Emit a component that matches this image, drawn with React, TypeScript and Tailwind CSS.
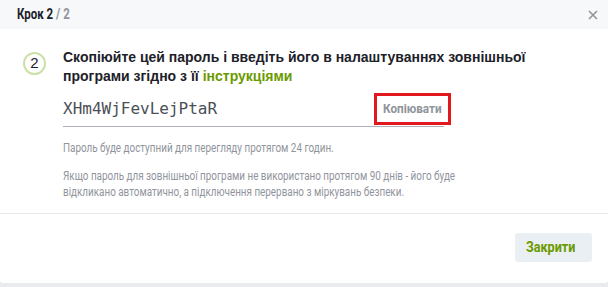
import React from 'react'

// Condensed look: Roboto squeezed horizontally (no condensed face installed)
const Cond: React.FC<{ className?: string; children: React.ReactNode }> = ({ className = 'scale-x-[0.79]', children }) => (
  <span className={`inline-block whitespace-nowrap origin-left font-['Roboto',sans-serif] ${className}`}>
    {children}
  </span>
)

export default function App() {
  return (
    <div className="w-[608px] h-[287px] bg-[#e9ebee] overflow-hidden">
      <div className="bg-white h-[283px] rounded-b-[3px] flex flex-col">
        {/* header */}
        <div className="h-[29px] bg-[#f6f8f9] flex items-center justify-between pl-[17px] pr-[10px]">
          <Cond className="scale-x-[0.82] text-[14px] font-bold text-[#1d2129]">
            Крок 2 <span className="text-[#90949c]">/ 2</span>
          </Cond>
          <svg width="10" height="10" viewBox="0 0 10 10" className="text-[#90949c]">
            <path d="M1 1 L9 9 M9 1 L1 9" stroke="currentColor" strokeWidth="1.6" />
          </svg>
        </div>

        {/* body */}
        <div className="flex gap-[17px] pl-[23px] pt-[19px] h-[185px] border-b border-[#e5eaec]">
          <div className="w-[23px] h-[23px] mt-[4px] rounded-full border-2 border-[#cde0a8] flex items-center justify-center shrink-0 font-['Liberation_Sans',sans-serif] text-[15px] text-[#1d2129]">
            2
          </div>
          <div className="flex flex-col">
            <div className="font-['Liberation_Sans',sans-serif] font-bold text-[14px] leading-[19px] text-[#1d2129] w-[490px]">
              Скопіюйте цей пароль і введіть його в налаштуваннях зовнішньої програми згідно з її{' '}
              <span className="text-[#6a9a00]">інструкціями</span>
            </div>
            <div className="flex items-center justify-between w-[381px] h-[33px] mt-[8px] border-b border-[#aeb2b8]">
              <span className="font-['DejaVu_Sans_Mono',monospace] text-[16px] text-[#4b4f56] -mt-[2px]">XHm4WjFevLejPtaR</span>
              <div className="w-[77px] h-[32px] border-[3px] border-[#e3181f] -mr-[7px] mt-[-2px] flex items-center pl-[6px]">
                <Cond className="scale-x-[0.9] text-[13px] font-bold text-[#90949c]">Копіювати</Cond>
              </div>
            </div>
            <div className="text-[12.5px] text-[#90949c] leading-[16px] mt-[13px]">
              <Cond>Пароль буде доступний для перегляду протягом 24 годин.</Cond>
            </div>
            <div className="text-[12.5px] text-[#90949c] leading-[16px] mt-[12px] flex flex-col">
              <Cond>Якщо пароль для зовнішньої програми не використано протягом 90 днів - його буде</Cond>
              <Cond>відкликано автоматично, а підключення перервано з міркувань безпеки.</Cond>
            </div>
          </div>
        </div>

        {/* footer */}
        <div className="flex justify-end pr-[16px] pt-[19px]">
          <button className="w-[77px] h-[29px] rounded-[3px] bg-[#e9eff2] text-[#6a9a00] text-[14px] font-bold flex items-center justify-center">
            <Cond className="scale-x-[0.9] origin-center">Закрити</Cond>
          </button>
        </div>
      </div>
    </div>
  )
}
